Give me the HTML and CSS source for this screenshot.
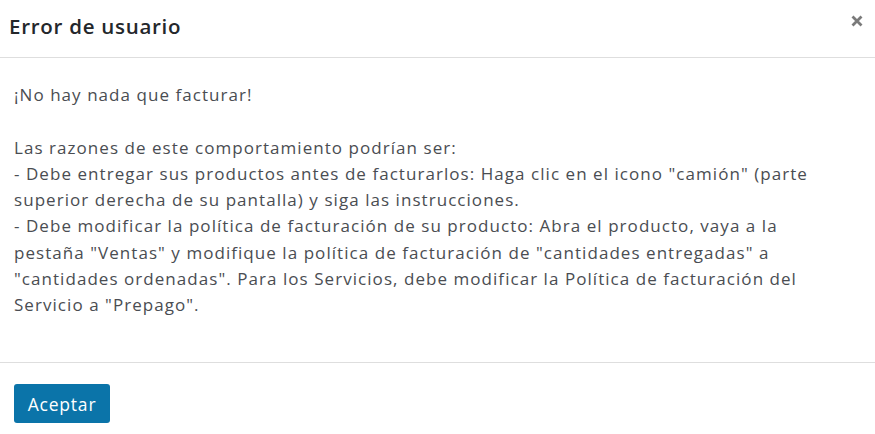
FILE: index.html
```html
<!DOCTYPE html>
<html lang="es">
<head>
<meta charset="utf-8">
<title>Error de usuario</title>
<link rel="stylesheet" href="styles.css">
</head>
<body>
<div class="modal">
  <header class="modal-header">
    <h4 class="modal-title">Error de usuario</h4>
    <button class="close" type="button" aria-label="Cerrar">
      <svg width="12" height="12" viewBox="0 0 12 12"><path d="M1.5 1.5 L10.5 10.5 M10.5 1.5 L1.5 10.5" stroke="#7a7a7a" stroke-width="2.8" stroke-linecap="butt"/></svg>
    </button>
  </header>
  <main class="modal-body">
    <p class="line">¡No hay nada que facturar!</p>
    <p class="line blank">&nbsp;</p>
    <p class="line">Las razones de este comportamiento podrían ser:</p>
    <p class="line">- Debe entregar sus productos antes de facturarlos: Haga clic en el icono "camión" (parte</p>
    <p class="line">superior derecha de su pantalla) y siga las instrucciones.</p>
    <p class="line">- Debe modificar la política de facturación de su producto: Abra el producto, vaya a la</p>
    <p class="line">pestaña "Ventas" y modifique la política de facturación de "cantidades entregadas" a</p>
    <p class="line">"cantidades ordenadas". Para los Servicios, debe modificar la Política de facturación del</p>
    <p class="line">Servicio a "Prepago".</p>
  </main>
  <footer class="modal-footer">
    <button class="btn-primary" type="button">Aceptar</button>
  </footer>
</div>
</body>
</html>
```

FILE: styles.css
```css
html, body {
  margin: 0;
  padding: 0;
  background: #ffffff;
}
body {
  font-family: "Open Sans", "Noto Sans", sans-serif;
  color: #4a4d52;
}
.modal {
  width: 875px;
  height: 434px;
  display: flex;
  flex-direction: column;
}
.modal-header {
  height: 57px;
  border-bottom: 1px solid #dedede;
  display: flex;
  align-items: center;
  justify-content: space-between;
  padding: 0 12px 0 9px;
  box-sizing: content-box;
}
.modal-title {
  margin: 0 0 6px 0;
  font-size: 20.5px;
  font-weight: 600;
  color: #24272b;
  letter-spacing: 0.72px;
}
.close {
  border: 0;
  background: none;
  padding: 0;
  margin: 0 0 15px 0;
  width: 12px;
  height: 12px;
  display: flex;
  cursor: pointer;
}
.modal-body {
  padding: 24px 14px 0 14px;
  height: 280px;
  border-bottom: 1px solid #dedede;
  display: flex;
  flex-direction: column;
}
.line {
  margin: 0;
  height: 26.3px;
  line-height: 26px;
  font-size: 17px;
  white-space: nowrap;
  letter-spacing: 1.05px;
}
.modal-footer {
  flex: 1;
  padding: 21px 14px 0 14px;
}
.btn-primary {
  font-family: "Open Sans", "Noto Sans", sans-serif;
  background: #0b74a9;
  color: #ffffff;
  border: 0;
  border-radius: 3px;
  width: 96px;
  height: 39px;
  font-size: 17.5px;
  letter-spacing: 0.8px;
  padding: 0;
  cursor: pointer;
}
```
